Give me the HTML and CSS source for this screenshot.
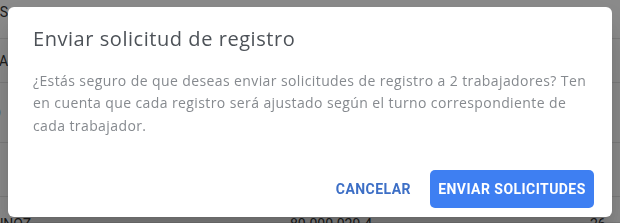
FILE: index.html
```html
<!DOCTYPE html>
<html lang="es">
<head>
<meta charset="utf-8">
<link rel="stylesheet" href="styles.css">
</head>
<body>
<div class="page">
  <div class="table">
    <div class="row r-head"><span class="c1">RAS</span><span class="c2"></span><span class="c3"></span></div>
    <div class="row r1"><span class="c1">TRA</span><span class="c2"></span><span class="c3"></span></div>
    <div class="row r2"><span class="c1">DO</span><span class="c2"></span><span class="c3"></span></div>
    <div class="row r3"><span class="c1"></span><span class="c2"></span><span class="c3"></span></div>
    <div class="row r4"><span class="c1">MUNOZ</span><span class="c2">80.000.029-4</span><span class="c3">26</span></div>
  </div>
</div>
<div class="backdrop">
  <div class="dialog" role="dialog">
    <h2 class="title">Enviar solicitud de registro</h2>
    <p class="text">¿Estás seguro de que deseas enviar solicitudes de registro a 2 trabajadores? Ten en cuenta que cada registro será ajustado según el turno correspondiente de cada trabajador.</p>
    <div class="actions">
      <button class="btn btn-text">CANCELAR</button>
      <button class="btn btn-primary">ENVIAR SOLICITUDES</button>
    </div>
  </div>
</div>
</body>
</html>
```

FILE: styles.css
```css
* { box-sizing: border-box; }
html, body { margin: 0; padding: 0; }
body {
  width: 620px;
  height: 223px;
  overflow: hidden;
  background: #ffffff;
  font-family: "Open Sans", "Liberation Sans", sans-serif;
}
.page { width: 620px; height: 223px; overflow: hidden; }
.table { display: flex; flex-direction: column; }
.row {
  display: flex;
  align-items: center;
  border-bottom: 1px solid #e4e4e4;
  font-family: "Roboto", sans-serif;
  font-size: 14px;
  color: #333;
}
.r-head { height: 39px; align-items: flex-start; padding-top: 4px; }
.r1 { height: 44px; }
.r2 { height: 60px; }
.r3 { height: 54px; }
.r4 { height: 26px; align-items: flex-start; padding-top: 19px; }
.c1 { width: 280px; margin-left: -18px; }
.c2 { width: 328px; padding-left: 28px; }
.c3 { flex: 1; }
.backdrop {
  position: fixed;
  inset: 0;
  background: rgba(0, 0, 0, 0.46);
  display: flex;
  align-items: center;
  justify-content: center;
}
.dialog {
  width: 604px;
  height: 210px;
  background: #fff;
  border-radius: 6px;
  box-shadow: 0 11px 15px -7px rgba(0,0,0,0.2), 0 24px 38px 3px rgba(0,0,0,0.14);
  padding: 16px 18px 9px 25px;
  display: flex;
  flex-direction: column;
}
.title {
  margin: 0;
  font-weight: 400;
  font-size: 20px;
  line-height: 32px;
  letter-spacing: 0.55px;
  color: #4d5258;
}
.text {
  margin: 15px 0 0;
  width: 560px;
  font-size: 14px;
  line-height: 22.5px;
  letter-spacing: 0.4px;
  color: #868a8f;
}
.actions {
  margin-top: auto;
  display: flex;
  justify-content: flex-end;
  align-items: center;
  gap: 11px;
}
.btn {
  font-family: "Roboto", sans-serif;
  font-weight: 700;
  font-size: 14px;
  border: none;
  border-radius: 5px;
  height: 38px;
  cursor: pointer;
  letter-spacing: 0.45px;
}
.btn-text {
  background: transparent;
  color: #3d6fc6;
  padding: 0 8px;
}
.btn-primary {
  background: #3e7ff2;
  color: #fff;
  padding: 0 8px;
  width: 164px;
}
```
